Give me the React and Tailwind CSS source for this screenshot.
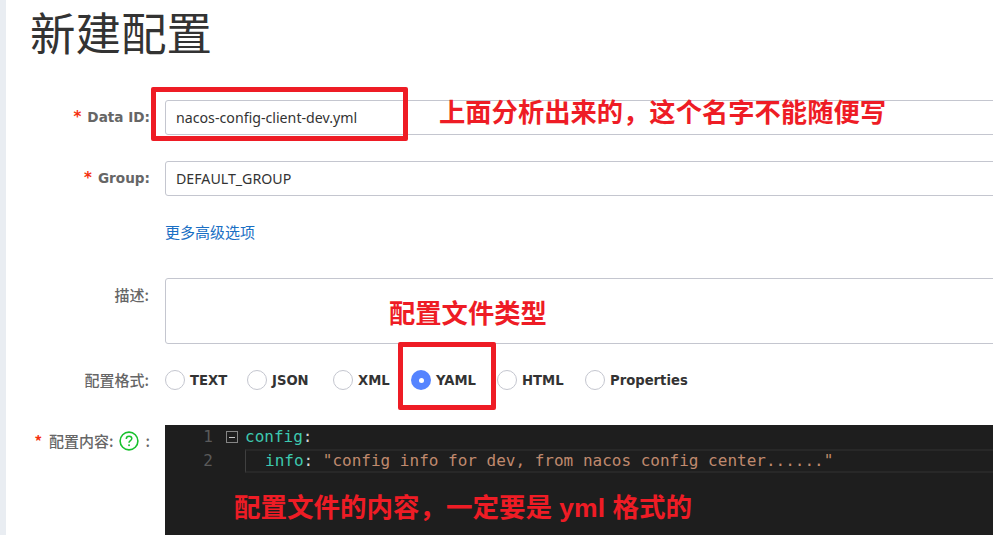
import React from 'react';

const sans = "font-['Noto_Sans','Noto_Sans_CJK_SC',sans-serif]";
const cjk = "font-['Noto_Sans_CJK_SC',sans-serif]";
const bold = "font-['DejaVu_Sans','Noto_Sans_CJK_SC',sans-serif]";

const formats = [
  { name: 'TEXT', w: 'w-[82px]' },
  { name: 'JSON', w: 'w-[86px]' },
  { name: 'XML', w: 'w-[78px]' },
  { name: 'YAML', w: 'w-[86px]', checked: true },
  { name: 'HTML', w: 'w-[88px]' },
  { name: 'Properties', w: 'w-[120px]' },
];

function Label({ required, children }) {
  return (
    <div className={`w-[120px] shrink-0 flex justify-end items-center text-[13.6px] font-bold text-[#666] whitespace-nowrap ${bold}`}>
      {required && <span className="text-[#f5300f] mr-[6px] text-[15px]">*</span>}
      {children}
    </div>
  );
}

function CjkLabel({ className, children }) {
  return <div className={`text-[15px] font-medium text-[#666] whitespace-nowrap ${cjk} ${className}`}>{children}</div>;
}

function Radio({ name, checked, w }) {
  return (
    <div className={`flex items-center shrink-0 ${w}`}>
      {checked ? (
        <span className="w-5 h-5 rounded-full bg-[#5584ff] flex items-center justify-center">
          <span className="w-[5px] h-[5px] rounded-full bg-white" />
        </span>
      ) : (
        <span className="w-5 h-5 rounded-full border border-[#c4c6cf] bg-white" />
      )}
      <span className={`ml-[5px] mt-[2px] text-[13.2px] font-bold text-[#333] ${bold}`}>{name}</span>
    </div>
  );
}

// red annotation boxes and notes sit on top of the form
function Note({ className, children }) {
  return (
    <div className={`absolute text-[#ee1c25] font-bold whitespace-nowrap font-['Liberation_Sans','Noto_Sans_CJK_SC',sans-serif] ${className}`}>{children}</div>
  );
}

export default function App() {
  return (
    <div className={`relative w-[993px] h-[535px] overflow-hidden bg-white flex ${sans}`}>
      <div className="w-[6px] shrink-0 bg-[#e9edf2]" />
      <div className="flex-1 min-w-0">
        <h1 className={`pl-[24px] h-[100px] text-[45.5px] leading-[62px] font-normal text-[#333] ${cjk}`}>新建配置</h1>

        <div className="flex h-[35px] items-stretch">
          <div className="w-[24px] shrink-0" />
          <Label required>Data ID:</Label>
          <div className="ml-[15px] w-[900px] shrink-0 border border-[#c4c6cf] rounded-[3px] pl-[10px] flex items-center text-[14.2px] text-[#333]">
            nacos-config-client-dev.yml
          </div>
        </div>

        <div className="flex h-[35px] items-stretch mt-[26px]">
          <div className="w-[24px] shrink-0" />
          <Label required>Group:</Label>
          <div className="ml-[15px] w-[900px] shrink-0 border border-[#c4c6cf] rounded-[3px] pl-[10px] flex items-center text-[14.2px] text-[#333]">
            DEFAULT_GROUP
          </div>
        </div>

        <div className={`ml-[159px] mt-[26px] h-[20px] leading-[20px] text-[15px] text-[#1a6fc4] ${cjk}`}>更多高级选项</div>

        <div className="flex mt-[36px] h-[66px]">
          <div className="w-[23px] shrink-0" />
          <CjkLabel className="w-[120px] shrink-0 text-right pt-[6px]">描述:</CjkLabel>
          <div className="ml-[16px] w-[900px] shrink-0 border border-[#c4c6cf] rounded-[3px]" />
        </div>

        <div className="flex items-center mt-[26px] h-[20px]">
          <div className="w-[23px] shrink-0" />
          <CjkLabel className="w-[120px] shrink-0 text-right">配置格式:</CjkLabel>
          <div className="ml-[16px] flex items-center">
            {formats.map((f) => (
              <Radio key={f.name} {...f} />
            ))}
          </div>
        </div>

        <div className="flex mt-[35px]">
          <div className="w-[23px] shrink-0" />
          <CjkLabel className="w-[121px] shrink-0 flex justify-end items-start pt-[5px]">
            <span className="text-[#f5300f] mr-[7px] text-[15px] font-bold">*</span>
            配置内容:
            <svg className="ml-[5px] mt-[1px] shrink-0" width="20" height="20" viewBox="0 0 20 20" fill="none">
              <circle cx="10" cy="10" r="8.9" stroke="#18c12e" strokeWidth="1.6" />
              <path d="M7.3 8c0-1.7 1.2-2.7 2.8-2.7s2.7 1 2.7 2.3c0 2-2.8 2-2.8 4.2" stroke="#18c12e" strokeWidth="1.5" />
              <rect x="9.2" y="13.4" width="1.7" height="1.7" fill="#18c12e" />
            </svg>
            <span className="ml-[7px]">:</span>
          </CjkLabel>
          <div className="ml-[15px] w-[900px] h-[120px] shrink-0 bg-[#1e1e1e] font-['DejaVu_Sans_Mono',monospace] text-[16px] leading-[24px]">
            <div className="flex h-[24px]">
              <span className="w-[48px] text-right text-[#5a5a5a]">1</span>
              <span className="ml-[13px] mt-[6px] w-[12px] h-[12px] border border-[#858585] flex items-center justify-center">
                <span className="w-[6px] h-px bg-[#c5c5c5]" />
              </span>
              <span className="ml-[7px] text-[#3dc9b0]">config<span className="text-[#d4d4d4]">:</span></span>
            </div>
            <div className="flex h-[24px]">
              <span className="w-[48px] text-right text-[#5a5a5a]">2</span>
              <div className="ml-[32px] flex-1 border-y-2 border-[#282828] border-l border-l-[#404040] pl-[19px] leading-[20px] whitespace-nowrap">
                <span className="text-[#3dc9b0]">info</span>
                <span className="text-[#d4d4d4]">: </span>
                <span className="text-[#c08a6e]">"config info for dev, from nacos config center......"</span>
              </div>
            </div>
          </div>
        </div>
      </div>

      <div className="absolute left-[151px] top-[87px] w-[257px] h-[54px] border-[5px] border-[#ee1c25] rounded-[2px]" />
      <div className="absolute left-[398px] top-[342px] w-[98px] h-[68px] border-[5px] border-[#ee1c25] rounded-[2px]" />
      <Note className="left-[439px] top-[94px] text-[26.3px] leading-[38px]">上面分析出来的，这个名字不能随便写</Note>
      <Note className="left-[389px] top-[295px] text-[26.3px] leading-[38px]">配置文件类型</Note>
      <Note className="left-[234px] top-[489px] text-[26.5px] leading-[38px]">配置文件的内容，一定要是 yml 格式的</Note>
    </div>
  );
}
